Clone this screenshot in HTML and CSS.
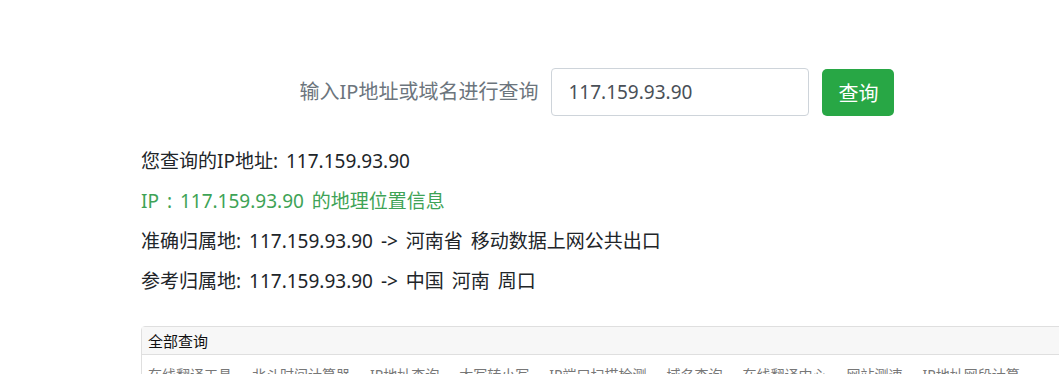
FILE: index.html
```html
<!DOCTYPE html>
<html lang="zh-CN">
<head>
<meta charset="utf-8">
<title>IP地址查询</title>
<link rel="stylesheet" href="styles.css">
</head>
<body>
<div class="container">
  <form class="search">
    <label class="search-label" for="ip">输入IP地址或域名进行查询</label>
    <input class="search-input" id="ip" type="text" value="117.159.93.90">
    <button class="search-btn" type="button">查询</button>
  </form>
  <div class="result">
    <p class="line">您查询的IP地址: 117.159.93.90</p>
    <p class="line green">IP : 117.159.93.90 的地理位置信息</p>
    <p class="line">准确归属地: 117.159.93.90 -&gt; 河南省 移动数据上网公共出口</p>
    <p class="line">参考归属地: 117.159.93.90 -&gt; 中国 河南 周口</p>
  </div>
  <div class="card">
    <div class="card-header">全部查询</div>
    <div class="card-body">
      <a class="tool">在线翻译工具</a>
      <a class="tool">北斗时间计算器</a>
      <a class="tool">IP地址查询</a>
      <a class="tool">大写转小写</a>
      <a class="tool">IP端口扫描检测</a>
      <a class="tool">域名查询</a>
      <a class="tool">在线翻译中心</a>
      <a class="tool">网站测速</a>
      <a class="tool">IP地址网段计算</a>
    </div>
  </div>
</div>
</body>
</html>
```
FILE: styles.css
```css
html, body {
  margin: 0;
  padding: 0;
  background: #fff;
  overflow: hidden;
}
body {
  font-family: "Noto Sans", "Noto Sans CJK SC", sans-serif;
  color: #212529;
}
.container {
  width: 912px;
  margin-left: 141px;
  padding-top: 68px;
}
.search {
  display: flex;
  justify-content: center;
  align-items: center;
  gap: 13px;
  margin: 0;
}
.search-label {
  font-size: 20px;
  color: #6c757d;
  line-height: 48px;
}
.search-input {
  box-sizing: border-box;
  width: 258px;
  height: 48px;
  border: 1px solid #ced4da;
  border-radius: 4px;
  padding: 0 16px;
  font-family: "Noto Sans", "Noto Sans CJK SC", sans-serif;
  font-size: 19px;
  color: #495057;
  margin: 0;
}
.search-btn {
  box-sizing: border-box;
  width: 72px;
  height: 47px;
  border: none;
  border-radius: 5px;
  background: #28a745;
  color: #fff;
  font-family: "Noto Sans CJK SC", sans-serif;
  font-size: 20px;
  padding: 0;
  margin: 0;
}
.result {
  margin-top: 25px;
}
.line {
  margin: 0;
  font-size: 19px;
  line-height: 40px;
  word-spacing: 3px;
}
.green {
  color: #3ea356;
}
.card {
  margin-top: 25px;
  width: 960px;
  border: 1px solid #dfdfdf;
  border-radius: 4px;
}
.card-header {
  background: #f7f7f7;
  border-bottom: 1px solid #dfdfdf;
  padding: 0 6px;
  height: 27px;
  line-height: 27px;
  font-size: 15px;
  color: #111;
  font-family: "Noto Sans CJK SC", sans-serif;
}
.card-body {
  padding: 10px 6px;
  display: flex;
  gap: 20px;
  font-size: 14px;
  line-height: 20px;
  color: #777;
  white-space: nowrap;
}
.tool {
  color: #777;
}
```
